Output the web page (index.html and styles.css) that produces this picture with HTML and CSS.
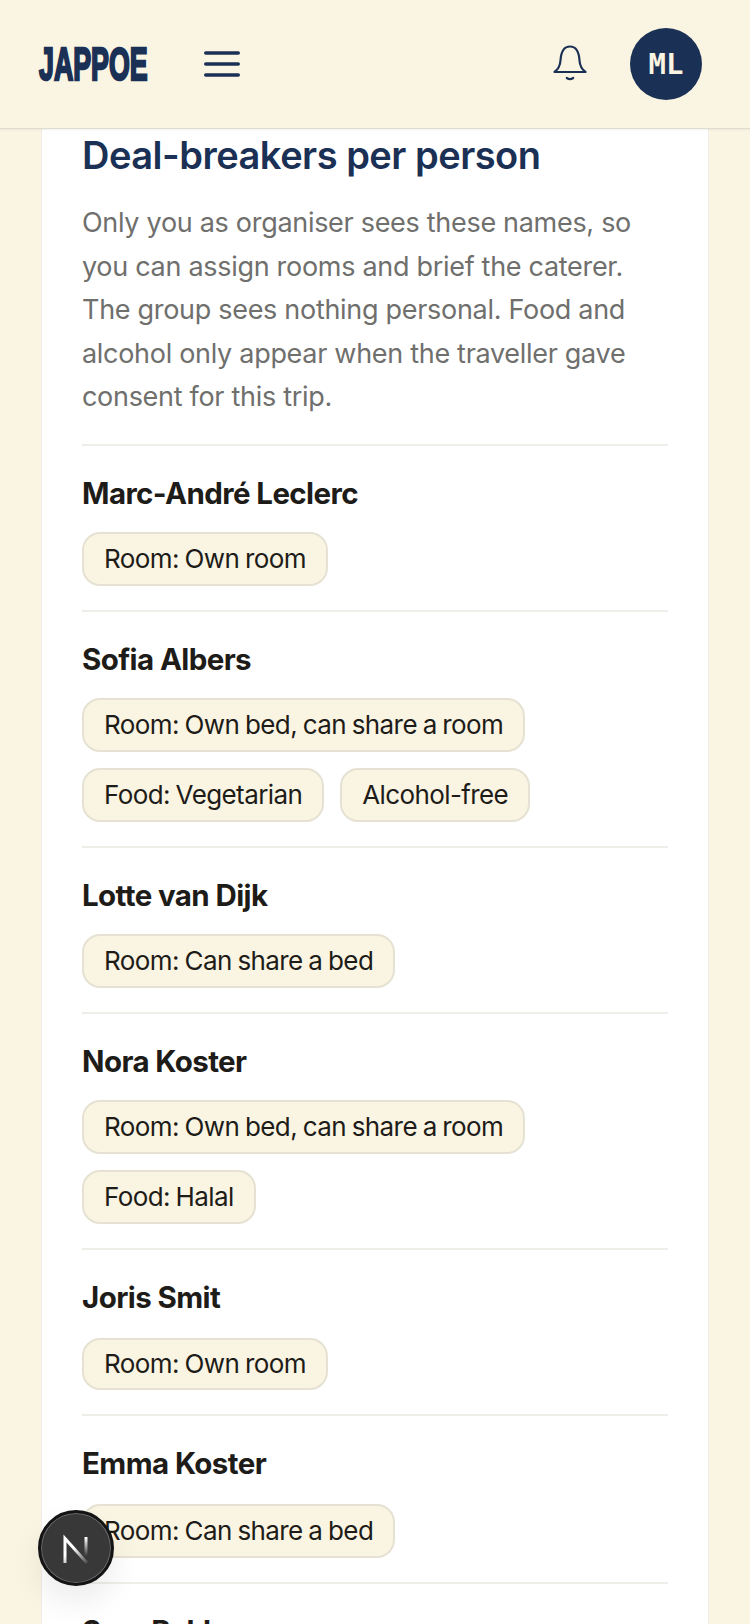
FILE: index.html
```html
<!DOCTYPE html>
<html lang="en">
<head>
<meta charset="utf-8">
<title>Deal-breakers per person</title>
<link rel="stylesheet" href="styles.css">
</head>
<body>
<header class="topbar">
  <div class="topbar-left">
    <span class="logo">JAPPOE</span>
    <button class="icon-btn menu-btn" aria-label="Menu">
      <svg width="36" height="30" viewBox="0 0 36 30" fill="none" stroke="#1b3055" stroke-width="3.600" stroke-linecap="round"><path d="M1.800 4h32.400M1.800 15h32.400M1.800 26h32.400"/></svg>
    </button>
  </div>
  <div class="topbar-right">
    <button class="icon-btn" aria-label="Notifications">
      <svg width="36" height="38" viewBox="0 0 36 38" fill="none" stroke="#1b3055" stroke-width="2.200" stroke-linecap="round" stroke-linejoin="round"><path d="M2.500 27c3.500-2.500 5.500-5 6-11.500C9 7.500 12 1.500 18 1.500S27 7.500 27.500 15.500c.5 6.500 2.500 9 6 11.500z"/><path d="M14.800 33c2 1.400 4.400 1.400 6.400 0"/></svg>
    </button>
    <div class="avatar">ML</div>
  </div>
</header>
<main class="page">
  <section class="card">
    <h2 class="title">Deal-breakers per person</h2>
    <p class="intro">Only you as organiser sees these names, so you can assign rooms and brief the caterer. The group sees nothing personal. Food and alcohol only appear when the traveller gave consent for this trip.</p>
    <ul class="people">
      <li class="person"><h3 class="name">Marc-André Leclerc</h3><div class="chips"><span class="chip">Room: Own room</span></div></li>
      <li class="person"><h3 class="name">Sofia Albers</h3><div class="chips"><span class="chip">Room: Own bed, can share a room</span><span class="chip">Food: Vegetarian</span><span class="chip">Alcohol-free</span></div></li>
      <li class="person"><h3 class="name">Lotte van Dijk</h3><div class="chips"><span class="chip">Room: Can share a bed</span></div></li>
      <li class="person"><h3 class="name">Nora Koster</h3><div class="chips"><span class="chip">Room: Own bed, can share a room</span><span class="chip">Food: Halal</span></div></li>
      <li class="person"><h3 class="name">Joris Smit</h3><div class="chips"><span class="chip">Room: Own room</span></div></li>
      <li class="person"><h3 class="name">Emma Koster</h3><div class="chips"><span class="chip">Room: Can share a bed</span></div></li>
      <li class="person"><h3 class="name">Sara Bakker</h3></li>
    </ul>
  </section>
</main>
<button class="dev-badge" aria-label="Next.js dev tools">
  <svg width="32" height="32" viewBox="0 0 32 32" fill="none"><defs><linearGradient id="fade" gradientUnits="userSpaceOnUse" x1="14" y1="16" x2="27" y2="31"><stop offset="0" stop-color="#fff"/><stop offset="1" stop-color="#fff" stop-opacity="0.1"/></linearGradient><linearGradient id="fade2" gradientUnits="userSpaceOnUse" x1="26" y1="6" x2="26" y2="24"><stop offset="0" stop-color="#fff"/><stop offset="1" stop-color="#fff" stop-opacity="0"/></linearGradient></defs><path d="M5 31V6.500L27 31" stroke="url(#fade)" stroke-width="3"/><path d="M26 5v19" stroke="url(#fade2)" stroke-width="3"/></svg>
</button>
</body>
</html>
```
FILE: styles.css
```css
* { box-sizing: border-box; }
html, body { margin: 0; padding: 0; height: 1624px; overflow: hidden; }
body { background: #faf4e2; font-family: Inter, "Liberation Sans", sans-serif; color: #1e1c19; }
button { background: none; border: 0; padding: 0; display: flex; }
.topbar { height: 129px; border-bottom: 1px solid #dfdbcf; display: flex; align-items: center; justify-content: space-between; padding: 0 48px 1px 39px; background: #faf4e2; box-shadow: 0 1px 2px rgba(0,0,0,.06); position: relative; z-index: 1; }
.topbar-left, .topbar-right { display: flex; align-items: center; }
.topbar-left { gap: 57px; }
.topbar-right { gap: 42px; }
.logo { font-family: "Liberation Sans Narrow", "Liberation Sans", sans-serif; font-weight: 700; font-size: 47px; color: #1b3055; display: inline-block; width: 108px; line-height: 1; white-space: nowrap; transform: scaleX(.57); transform-origin: left center; -webkit-text-stroke: 2.500px #1b3055; }
.avatar { width: 72px; height: 72px; border-radius: 50%; background: #1b3055; color: #faf4e2; font-family: "DejaVu Sans Mono", monospace; font-weight: 700; font-size: 29px; display: flex; align-items: center; justify-content: center; }
.card { margin: 0 41px; height: 1495px; background: #fff; border: 1px solid #efeee9; border-top: 0; border-bottom: 0; padding: 0 40px; overflow: hidden; }
.title { margin: 0; padding-top: 1px; font-size: 38px; line-height: 50px; font-weight: 600; color: #1b3055; letter-spacing: -0.500px; }
.intro { margin: 21px 0 0; font-size: 27px; line-height: 43.500px; color: #6f6f6d; letter-spacing: -0.300px; }
.people { list-style: none; margin: 25px 0 0; padding: 0; }
.person { border-top: 2px solid #efeee9; padding: 28px 0 24px; }
.person:nth-child(n+5) .name { margin-bottom: 22px; }
.person:nth-child(5) .chip { height: 52px; }
.name { margin: 0 0 20px; font-size: 29.500px; line-height: 38px; font-weight: 700; letter-spacing: -0.600px; color: #1e1c19; }
.chips { display: flex; flex-wrap: wrap; gap: 16px; }
.chip { height: 54px; padding: 0 20px; display: flex; align-items: center; background: #faf4e2; border: 2px solid #e6e2d3; border-radius: 18px; font-size: 26px; color: #1e1c19; letter-spacing: -0.600px; word-spacing: -1px; }
.dev-badge { position: fixed; left: 38px; top: 1510px; width: 76px; height: 76px; border-radius: 50%; background: #383838; border: 3px solid #141414; align-items: center; justify-content: center; box-shadow: 0 0 0 1px rgba(255,255,255,.25) inset, 0 16px 32px rgba(0,0,0,.08); z-index: 2; }
```
